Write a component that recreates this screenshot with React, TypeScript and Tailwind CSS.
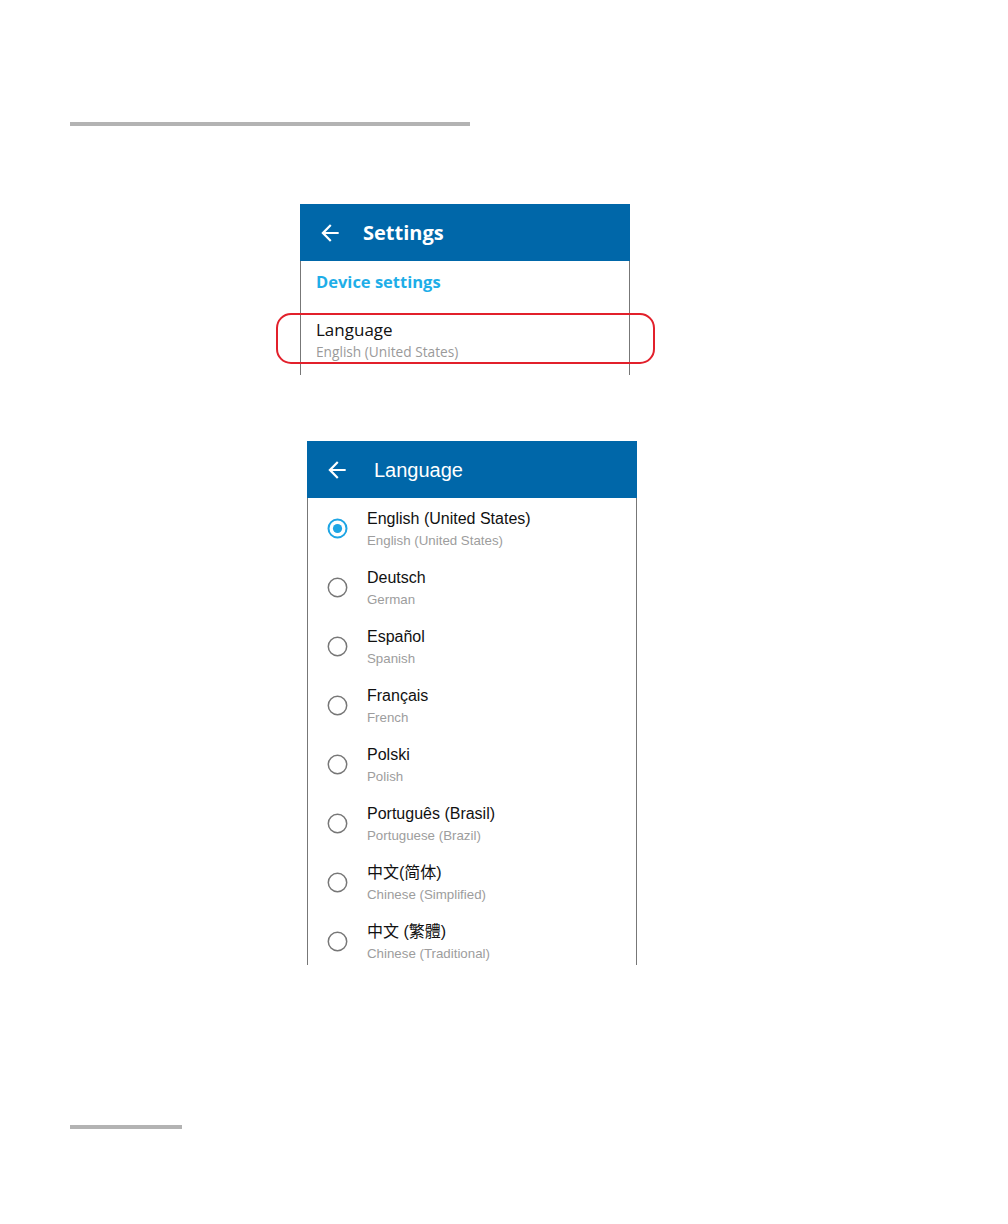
import React from "react";

const Arrow = () => (
  <svg width="26" height="26" viewBox="0 0 24 24" fill="white" aria-hidden="true">
    <path d="M20 11H7.83l5.59-5.59L12 4l-8 8 8 8 1.41-1.41L7.83 13H20v-2z" />
  </svg>
);

const Radio = ({ checked }: { checked?: boolean }) =>
  checked ? (
    <svg width="21" height="21" viewBox="0 0 21 21" aria-hidden="true">
      <circle cx="10.5" cy="10.5" r="9" fill="none" stroke="#1ea5e4" strokeWidth="2" />
      <circle cx="10.5" cy="10.5" r="4.6" fill="#1ea5e4" />
    </svg>
  ) : (
    <svg width="21" height="21" viewBox="0 0 21 21" aria-hidden="true">
      <circle cx="10.5" cy="10.5" r="9.2" fill="none" stroke="#777777" strokeWidth="1.5" />
    </svg>
  );

const langs: { name: string; sub: string; checked?: boolean; cjk?: string }[] = [
  { name: "English (United States)", sub: "English (United States)", checked: true },
  { name: "Deutsch", sub: "German" },
  { name: "Español", sub: "Spanish" },
  { name: "Français", sub: "French" },
  { name: "Polski", sub: "Polish" },
  { name: "Português (Brasil)", sub: "Portuguese (Brazil)" },
  { name: "中文(简体)", sub: "Chinese (Simplified)", cjk: "sc" },
  { name: "中文 (繁體)", sub: "Chinese (Traditional)", cjk: "tc" },
];

export default function App() {
  return (
    <div className="min-h-[1224px] w-[1008px] bg-white flex flex-col">
      <div className="ml-[70px] mt-[122px] h-[4px] w-[400px] bg-[#b3b3b3]" />

      {/* Settings screen */}
      <div className="relative ml-[300px] mt-[78px] w-[330px] flex flex-col">
        <div className="h-[57px] bg-[#0067a9] flex items-center pl-[17px]">
          <Arrow />
          <span className="ml-[20px] text-white text-[20px] font-bold font-['Open_Sans',sans-serif] leading-none">
            Settings
          </span>
        </div>
        <div className="h-[114px] border-x border-[#777777] pl-[15px] flex flex-col font-['Open_Sans',sans-serif]">
          <div className="mt-[9px] h-[24px] leading-[24px] text-[16.5px] font-bold text-[#1eaee8]">
            Device settings
          </div>
          <div className="mt-[24px] h-[24px] leading-[24px] text-[17px] text-[#111111]">Language</div>
          <div className="h-[20px] leading-[20px] text-[13.7px] text-[#9a9a9a]">English (United States)</div>
        </div>
        <div className="absolute left-[-24px] top-[109px] w-[379px] h-[51px] border-2 border-[#e2202b] rounded-[15px]" />
      </div>

      {/* Language screen */}
      <div className="ml-[307px] mt-[66px] w-[330px] flex flex-col">
        <div className="h-[57px] bg-[#0067a9] flex items-center pl-[17px]">
          <Arrow />
          <span className="ml-[24px] text-white text-[20px] font-['Liberation_Sans',Arial,sans-serif] leading-none">
            Language
          </span>
        </div>
        <div className="h-[467px] overflow-hidden border-x border-[#777777] flex flex-col font-['Liberation_Sans',Arial,sans-serif]">
          {langs.map((l) => (
            <div key={l.name} className="h-[59px] shrink-0 flex items-start">
              <div className="h-[60px] w-[59px] shrink-0 flex items-center pl-[19px]">
                <Radio checked={l.checked} />
              </div>
              <div className="flex flex-col">
                <div
                  className={
                    "mt-[11px] h-[20px] leading-[20px] text-[16px] text-[#111111] " +
                    (l.cjk === "sc"
                      ? "font-['Liberation_Sans','Noto_Sans_CJK_SC',sans-serif]"
                      : l.cjk === "tc"
                      ? "font-['Liberation_Sans','Noto_Sans_CJK_TC',sans-serif]"
                      : "")
                  }
                >
                  {l.name}
                </div>
                <div className="mt-[3px] h-[18px] leading-[18px] text-[13.3px] text-[#9d9d9d]">{l.sub}</div>
              </div>
            </div>
          ))}
        </div>
      </div>

      <div className="ml-[70px] mt-[160px] h-[4px] w-[112px] bg-[#b3b3b3]" />
    </div>
  );
}
